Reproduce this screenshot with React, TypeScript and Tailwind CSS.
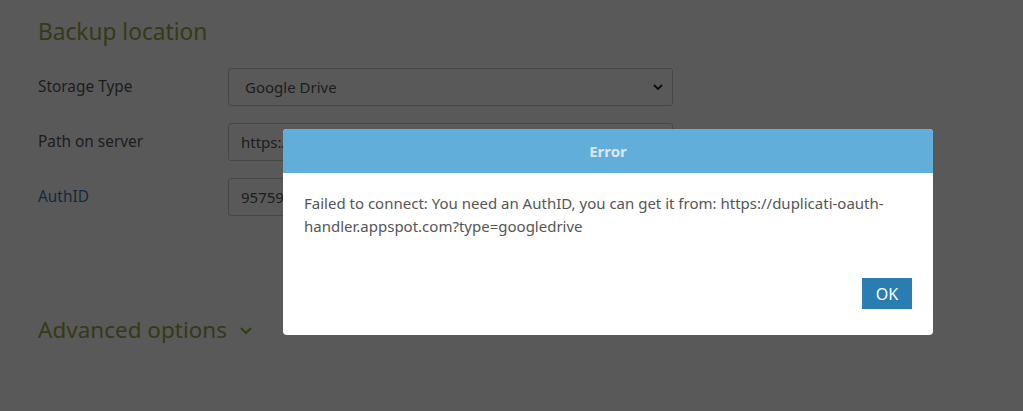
import React from "react";

export default function App() {
  return (
    <div className="relative h-[411px] w-[1023px] overflow-hidden bg-white font-['Noto_Sans',sans-serif]">
      <div className="pl-[38px] pt-[15px]">
        <h2 className="text-[22.7px] leading-[34px] text-[#9aa33f]">Backup location</h2>
        <div className="mt-[19px] flex flex-col gap-[17px]">
          <div className="flex items-center">
            <div className="w-[190px] text-[15.4px] text-[#555]">Storage Type</div>
            <div className="flex h-[38px] w-[445px] items-center justify-between rounded-[3px] border border-[#ccc] px-[16px] text-[15px] text-[#555]">
              <span>Google Drive</span>
              <svg width="12" height="12" viewBox="0 0 12 12" className="-mr-[8px]"><path d="M2 4l4 4 4-4" fill="none" stroke="#222" strokeWidth="1.8" /></svg>
            </div>
          </div>
          <div className="flex items-center">
            <div className="w-[190px] text-[15.4px] text-[#555]">Path on server</div>
            <div className="flex h-[38px] w-[445px] items-center rounded-[3px] border border-[#ccc] px-[12px] text-[15px] text-[#555]">https://</div>
          </div>
          <div className="flex items-center">
            <div className="w-[190px] text-[15.4px] text-[#337ab7]">AuthID</div>
            <div className="flex h-[38px] w-[445px] items-center rounded-[3px] border border-[#ccc] px-[12px] text-[15px] text-[#555]">95759123456789</div>
          </div>
        </div>
        <div className="mt-[97px] flex items-center gap-[12px]">
          <span className="text-[22.5px] leading-[34px] text-[#9aa33f]">Advanced options</span>
          <svg width="14" height="10" viewBox="0 0 14 10" className="mt-[2px]"><path d="M2 2l5 5 5-5" fill="none" stroke="#8ab62c" strokeWidth="2.2" /></svg>
        </div>
      </div>

      <div className="absolute inset-0 bg-black/65" />

      <div className="absolute left-[283px] top-[129px] flex h-[206px] w-[650px] flex-col overflow-hidden rounded-[4px] bg-white">
        <div className="flex h-[44px] items-center justify-center bg-[#62aedb] text-[15px] font-bold text-[#dfe6ea]">Error</div>
        <div className="flex flex-1 flex-col px-[21px] pt-[19px] pb-[26px]">
          <p className="text-[15px] leading-[23px] text-[#555]">
            Failed to connect: You need an AuthID, you can get it from: https://duplicati-oauth-handler.appspot.com?type=googledrive
          </p>
          <div className="mt-auto flex justify-end">
            <button className="h-[31px] w-[50px] bg-[#2a7db2] text-[16px] text-white">OK</button>
          </div>
        </div>
      </div>
    </div>
  );
}
